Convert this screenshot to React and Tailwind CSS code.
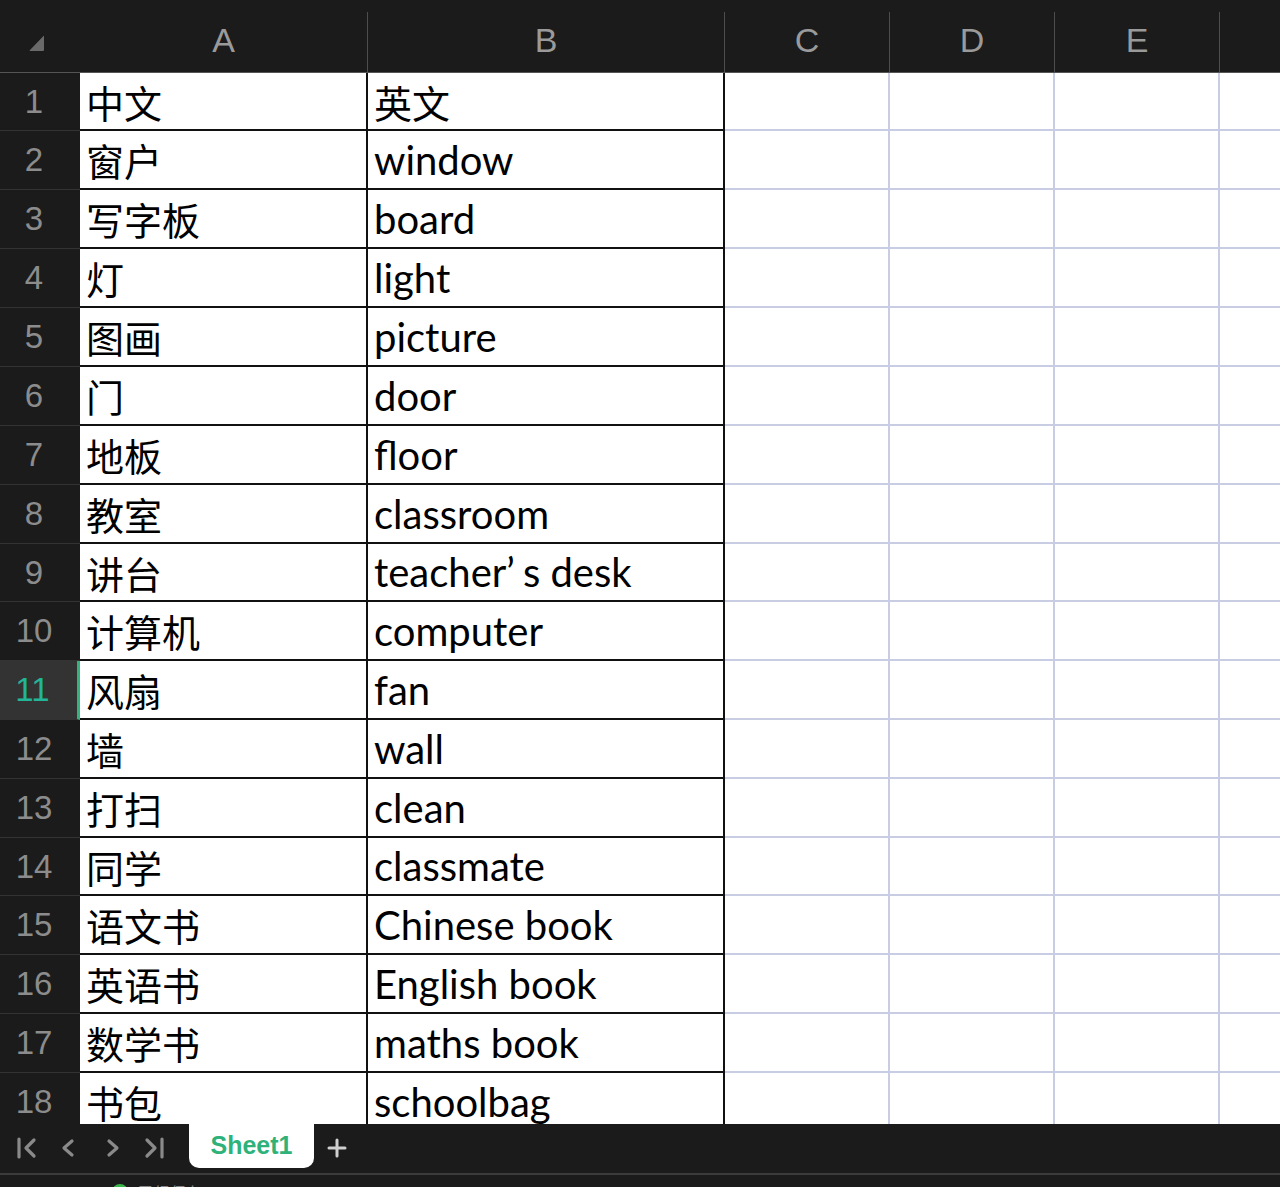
import React from 'react';

const rows = [
  { zh: '中文', en: '英文', h: 58 },
  { zh: '窗户', en: 'window', h: 59 },
  { zh: '写字板', en: 'board', h: 59 },
  { zh: '灯', en: 'light', h: 59 },
  { zh: '图画', en: 'picture', h: 59 },
  { zh: '门', en: 'door', h: 59 },
  { zh: '地板', en: 'floor', h: 59 },
  { zh: '教室', en: 'classroom', h: 59 },
  { zh: '讲台', en: 'teacher’s desk', h: 58 },
  { zh: '计算机', en: 'computer', h: 59 },
  { zh: '风扇', en: 'fan', h: 59 },
  { zh: '墙', en: 'wall', h: 59 },
  { zh: '打扫', en: 'clean', h: 59 },
  { zh: '同学', en: 'classmate', h: 58 },
  { zh: '语文书', en: 'Chinese book', h: 59 },
  { zh: '英语书', en: 'English book', h: 59 },
  { zh: '数学书', en: 'maths book', h: 59 },
  { zh: '书包', en: 'schoolbag', h: 59 },
];

const cjk = { fontFamily: '"Noto Sans CJK SC", "Noto Sans", sans-serif' };
const latin = { fontFamily: 'Lato, "Noto Sans CJK SC", sans-serif' };
const ui = { fontFamily: '"Liberation Sans", Arial, sans-serif' };

// the apostrophe sits with a wide gap after it in the original
const English = ({ text }) => {
  const parts = text.split('’');
  if (parts.length === 1) return text;
  return (
    <>
      {parts[0]}
      <span className="mr-[8px]">’</span>
      {parts[1]}
    </>
  );
};

const NavIcon = ({ type, className }) => (
  <svg className={className} width="24" height="24" viewBox="0 0 24 24" fill="none" stroke="#8a8a8a" strokeWidth="3.2" strokeLinecap="round" strokeLinejoin="round">
    {type === 'first' && (<><path d="M4 3v18" /><path d="M19 4l-8 8 8 8" /></>)}
    {type === 'prev' && <path d="M16 5l-8 7 8 7" />}
    {type === 'next' && <path d="M8 5l8 7-8 7" />}
    {type === 'last' && (<><path d="M20 3v18" /><path d="M5 4l8 8-8 8" /></>)}
  </svg>
);

const HeaderCell = ({ label, width }) => (
  <div className={`${width} h-[72px] flex flex-col justify-end shrink-0`}>
    <div className="h-[60px] border-r border-[#4d4d4d] flex items-center justify-center pb-[4px] text-[34px] text-[#9a9a9a]" style={ui}>
      {label}
    </div>
  </div>
);

export default function App() {
  return (
    <div className="w-[1280px] h-[1187px] bg-[#1b1b1b] overflow-hidden flex flex-col">
      <div className="h-[1124px] overflow-hidden shrink-0">
        {/* Column header */}
        <div className="flex h-[72px]">
          <div className="w-[80px] h-[72px] shrink-0 flex items-end pb-[20px] pl-[28px]">
            <svg width="18" height="17" viewBox="0 0 18 17">
              <path d="M16 1 L16 15 Q16 16 15 16 L2 16 Q1 16 2 15 L15 1.5 Q16 0.5 16 1 Z" fill="#6a6a6a" />
            </svg>
          </div>
          <HeaderCell label="A" width="w-[288px]" />
          <HeaderCell label="B" width="w-[357px]" />
          <HeaderCell label="C" width="w-[165px]" />
          <HeaderCell label="D" width="w-[165px]" />
          <HeaderCell label="E" width="w-[165px]" />
          <div className="flex-1 h-[72px]" />
        </div>

        {/* Rows */}
        <div className="border-t border-[#555]">
          {rows.map((row, i) => {
            const active = i === 10;
            return (
              <div key={i} className={`flex ${row.h === 58 ? 'h-[58px]' : 'h-[59px]'}`}>
                <div
                  className={`w-[80px] shrink-0 flex items-center justify-center pr-[12px] text-[33px] border-b border-[#333] ${
                    active ? 'bg-[#333333] text-[#22b597] border-r-[3px] border-r-[#35b27d]' : 'text-[#8c8c8c]'
                  }`}
                  style={ui}
                >
                  {i + 1}
                </div>
                <div className="w-[288px] shrink-0 bg-white border-r-2 border-b-2 border-[#111] flex items-center pl-[6px] text-[38px] text-black" style={cjk}>
                  {row.zh}
                </div>
                <div
                  className={`w-[357px] shrink-0 bg-white border-r-2 border-b-2 border-[#111] flex items-center pl-[6px] text-black whitespace-nowrap ${
                    i === 0 ? 'text-[38px]' : 'text-[40px]'
                  }`}
                  style={i === 0 ? cjk : latin}
                >
                  <English text={row.en} />
                </div>
                <div className="w-[165px] shrink-0 bg-white border-r-2 border-b-2 border-[#c8cde4]" />
                <div className="w-[165px] shrink-0 bg-white border-r-2 border-b-2 border-[#c8cde4]" />
                <div className="w-[165px] shrink-0 bg-white border-r-2 border-b-2 border-[#c8cde4]" />
                <div className="flex-1 bg-white border-b-2 border-[#c8cde4]" />
              </div>
            );
          })}
        </div>
      </div>

      {/* Sheet tabs */}
      <div className="h-[49px] shrink-0 flex items-start">
        <div className="flex items-center pl-[15px] h-[48px]">
          <NavIcon type="first" />
          <NavIcon type="prev" className="ml-[17px]" />
          <NavIcon type="next" className="ml-[21px]" />
          <NavIcon type="last" className="ml-[17px]" />
        </div>
        <div className="ml-[23px] w-[125px] h-[44px] bg-white rounded-b-[10px] flex items-center justify-center text-[25px] font-semibold text-[#2fb27a]" style={ui}>
          Sheet1
        </div>
        <div className="ml-[12px] h-[48px] flex items-center">
          <svg width="22" height="22" viewBox="0 0 22 22" stroke="#cfcfcf" strokeWidth="3" strokeLinecap="round">
            <path d="M11 3v16M3 11h16" />
          </svg>
        </div>
      </div>
      <div className="h-[2px] bg-[#3c3c3c] shrink-0" />

      {/* Status bar, cut off */}
      <div className="flex-1 overflow-hidden">
        <div className="flex items-center gap-[10px] pl-[112px] pt-[5px]">
          <div className="w-[16px] h-[16px] rounded-full bg-[#3bb54a]" />
          <span className="text-[16px] text-[#888]" style={cjk}>已经保存</span>
        </div>
      </div>
    </div>
  );
}
